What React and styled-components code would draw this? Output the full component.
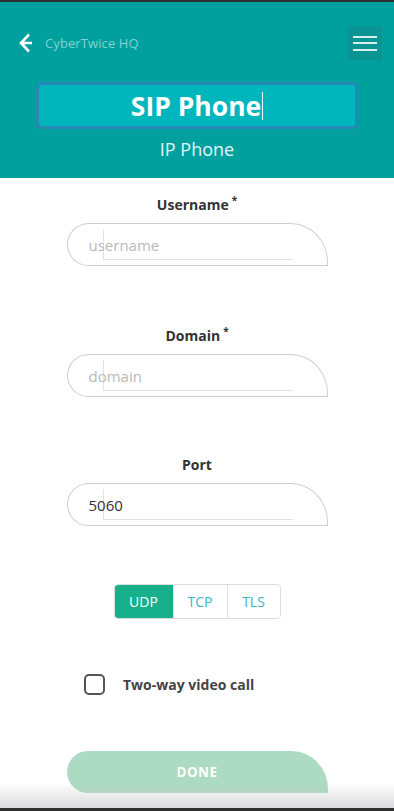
import React from "react";
import styled, { createGlobalStyle } from "styled-components";

const Global = createGlobalStyle`
  html, body { margin: 0; padding: 0; background: #ffffff; }
  body { font-family: "Open Sans", "Noto Sans", sans-serif; }
  * { box-sizing: border-box; }
`;

const Page = styled.div`
  width: 394px;
  min-height: 811px;
  background: #fff;
`;

const TopLine = styled.div`
  height: 2px;
  background: #2e2e2e;
`;

const Header = styled.header`
  background: #00a09f;
  padding: 24px 0 17px;
  display: flex;
  flex-direction: column;
`;

const NavRow = styled.div`
  display: flex;
  align-items: center;
  justify-content: space-between;
  padding: 0 12px 0 19px;
  height: 34px;
`;

const Back = styled.div`
  display: flex;
  align-items: center;
  gap: 13px;
  color: #7fd3d3;
  font-size: 13px;
  letter-spacing: 0.1px;
`;

const MenuButton = styled.div`
  width: 34px;
  height: 34px;
  background: #0b9494;
  display: flex;
  flex-direction: column;
  align-items: center;
  justify-content: center;
  gap: 4.5px;
`;

const MenuLine = styled.span`
  display: block;
  width: 24px;
  height: 2px;
  background: #d6f0f0;
`;

const TitleBox = styled.div`
  margin: 22px 36px 0;
  height: 47px;
  border: 3px solid #2688b4;
  border-radius: 5px;
  background: #00b6bd;
  display: flex;
  align-items: center;
  justify-content: center;
  color: #fff;
  font-weight: 700;
  font-size: 26.5px;
`;

const Caret = styled.span`
  display: inline-block;
  width: 1px;
  height: 28px;
  background: #e8f8f8;
  margin-left: 1px;
`;

const Subtitle = styled.div`
  margin-top: 8px;
  text-align: center;
  color: #e4f6f6;
  font-size: 18px;
  line-height: 24px;
`;

const Form = styled.div`
  display: flex;
  flex-direction: column;
  align-items: center;
  padding-top: 17px;
`;

const Field = styled.div`
  display: flex;
  flex-direction: column;
  align-items: center;
  margin-bottom: ${(p) => p.$mb}px;
`;

const Label = styled.div`
  font-weight: 700;
  font-size: 14px;
  line-height: 20px;
  color: #333;
  margin-bottom: 8px;
`;

const Req = styled.sup`
  font-size: 10px;
  margin-left: 3px;
  vertical-align: 6px;
  line-height: 0;
`;

const InputShape = styled.div`
  position: relative;
  width: 261px;
  height: 43px;
  border: 1px solid #cfcfcf;
  border-radius: 22px 38px 0 22px / 22px 40px 0 22px;
  display: flex;
  align-items: center;
  padding-left: 21px;
  font-size: 15px;
  color: ${(p) => (p.$filled ? "#333" : "#b9b9b9")};
`;

const InnerGuide = styled.span`
  position: absolute;
  left: 35px;
  top: 5px;
  width: 190px;
  height: 31px;
  border-left: 1px solid #e2e2e2;
  border-bottom: 1px solid #e2e2e2;
`;

const FieldText = styled.span`
  position: relative;
`;

const Segments = styled.div`
  display: flex;
  height: 35px;
  border: 1px solid #dddddd;
  border-radius: 4px;
  overflow: hidden;
  margin-bottom: 55px;
`;

const Segment = styled.div`
  width: ${(p) => p.$w}px;
  display: flex;
  align-items: center;
  justify-content: center;
  font-size: 14px;
  background: ${(p) => (p.$active ? "#18b08b" : "#fff")};
  color: ${(p) => (p.$active ? "#fff" : "#3cb5c3")};
  border-left: ${(p) => (p.$first ? "none" : "1px solid #e2e2e2")};
`;

const CheckRow = styled.div`
  align-self: flex-start;
  margin-left: 84px;
  display: flex;
  align-items: center;
  gap: 18px;
  margin-bottom: 56px;
`;

const CheckBox = styled.span`
  width: 21px;
  height: 21px;
  border: 2px solid #555;
  border-radius: 5px;
`;

const CheckLabel = styled.span`
  font-weight: 700;
  font-size: 14px;
  color: #444;
`;

const DoneButton = styled.div`
  width: 261px;
  height: 42px;
  background: #acdac3;
  border-radius: 22px 38px 0 22px / 22px 40px 0 22px;
  display: flex;
  align-items: center;
  justify-content: center;
  color: #fff;
  font-weight: 700;
  font-size: 13.5px;
  letter-spacing: 0.4px;
`;

const BottomShade = styled.div`
  position: fixed;
  left: 0;
  right: 0;
  bottom: 0;
  height: 28px;
  background: linear-gradient(to bottom, rgba(200, 200, 204, 0) 0%, rgba(200, 200, 204, 0.65) 88%, #2e2e2e 89%, #2e2e2e 100%);
  pointer-events: none;
`;

function ArrowLeft() {
  return (
    <svg width="13" height="20" viewBox="0 0 13 20" fill="none">
      <path d="M13 10H2M10 1.5L2 10l8 8.5" stroke="#fff" strokeWidth="2.6" strokeLinecap="butt" />
    </svg>
  );
}

function InputField({ label, required, value, placeholder, mb }) {
  return (
    <Field $mb={mb}>
      <Label>
        {label}
        {required && <Req>*</Req>}
      </Label>
      <InputShape $filled={!!value}>
        <InnerGuide />
        <FieldText>{value || placeholder}</FieldText>
      </InputShape>
    </Field>
  );
}

export default function App() {
  return (
    <Page>
      <Global />
      <TopLine />
      <Header>
        <NavRow>
          <Back>
            <ArrowLeft />
            <span>CyberTwice HQ</span>
          </Back>
          <MenuButton>
            <MenuLine />
            <MenuLine />
            <MenuLine />
          </MenuButton>
        </NavRow>
        <TitleBox>
          SIP Phone
          <Caret />
        </TitleBox>
        <Subtitle>IP Phone</Subtitle>
      </Header>
      <Form>
        <InputField label="Username" required placeholder="username" mb={60} />
        <InputField label="Domain" required placeholder="domain" mb={58} />
        <InputField label="Port" value="5060" mb={58} />
        <Segments>
          <Segment $w={58} $active $first>UDP</Segment>
          <Segment $w={54}>TCP</Segment>
          <Segment $w={53}>TLS</Segment>
        </Segments>
        <CheckRow>
          <CheckBox />
          <CheckLabel>Two-way video call</CheckLabel>
        </CheckRow>
        <DoneButton>DONE</DoneButton>
      </Form>
      <BottomShade />
    </Page>
  );
}
